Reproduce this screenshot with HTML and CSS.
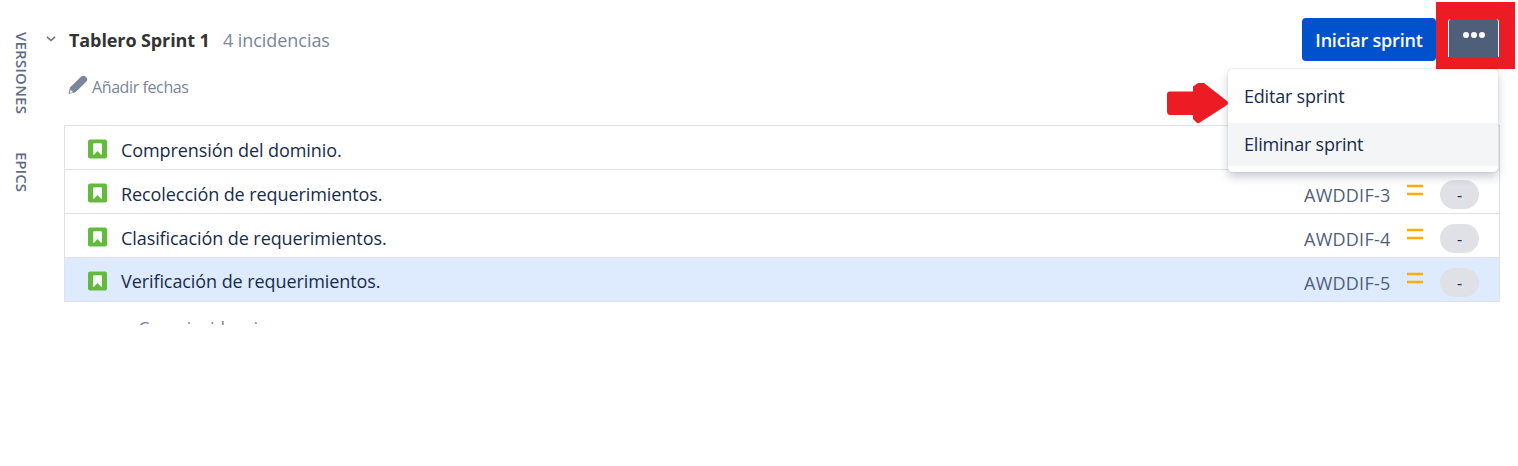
FILE: index.html
```
<!DOCTYPE html>
<html lang="es">
<head>
<meta charset="utf-8">
<title>Tablero Sprint 1</title>
<link rel="stylesheet" href="styles.css">
</head>
<body>
<svg class="defs" width="0" height="0">
  <symbol id="story" viewBox="0 0 19 20"><rect y=".5" width="19" height="19" rx="2" fill="#63ba3c"/><path d="M6 4.300h7q.9 0 .9 1v10.400H13L9.500 12 6 15.700h-.9V5.300q0-1 .9-1z" fill="#fff"/></symbol>
  <symbol id="medium" viewBox="0 0 16 14"><path d="M0 2h16M0 10h16" stroke="#ffab00" stroke-width="2.700"/></symbol>
</svg>
<div class="page">
  <nav class="rail">
    <span class="versions">VERSIONES</span>
    <span class="epics">EPICS</span>
  </nav>
  <main class="sprint">
    <header class="head">
      <svg class="chevron" width="12" height="8" viewBox="0 0 12 8"><path d="M2 1.800l4 3.700 4-3.700" fill="none" stroke="#707070" stroke-width="1.600"/></svg>
      <h1 class="title">Tablero Sprint 1</h1>
      <span class="count">4 incidencias</span>
      <button class="start"><span>Iniciar sprint</span></button>
      <div class="mark"><button class="more" aria-label="Más"><i></i><i></i><i></i></button></div>
    </header>
    <div class="dates">
      <svg width="20" height="20" viewBox="0 0 20 20"><path d="M.6 19l1.300-6.500L13 1.800Q15.500-.2 18 2t.2 4.800L7.500 17.300z" fill="#7a869a"/><path d="M2.600 14.800l2.500 2.500-3.200.7z" fill="#fff"/></svg>
      <span class="add">Añadir fechas</span>
    </div>
    <section class="issues">
      <div class="row"><svg class="story"><use href="#story"/></svg><span class="name n1">Comprensión del dominio.</span></div>
      <div class="row"><svg class="story"><use href="#story"/></svg><span class="name n2">Recolección de requerimientos.</span><span class="key">AWDDIF-3</span><svg class="medium"><use href="#medium"/></svg><span class="points">-</span></div>
      <div class="row"><svg class="story"><use href="#story"/></svg><span class="name n3">Clasificación de requerimientos.</span><span class="key">AWDDIF-4</span><svg class="medium"><use href="#medium"/></svg><span class="points">-</span></div>
      <div class="row selected"><svg class="story"><use href="#story"/></svg><span class="name n4">Verificación de requerimientos.</span><span class="key">AWDDIF-5</span><svg class="medium"><use href="#medium"/></svg><span class="points">-</span></div>
    </section>
    <div class="create"><span>Crear incidencia</span></div>
  </main>
  <div class="menu">
    <div class="item"><span class="edit">Editar sprint</span></div>
    <div class="item active"><span class="remove">Eliminar sprint</span></div>
  </div>
  <svg class="arrow" width="61" height="42" viewBox="0 0 61 42"><path d="M3 9.500h23V4.500L31 1h6l23 18q2 2 0 4L32 41h-2l-4-4v-4H3q-3 0-3-4V12.500q0-3 3-3z" fill="#ed1c24"/></svg>
</div>
</body>
</html>
```
FILE: styles.css
```
* { box-sizing: border-box; }
body { margin: 0; background: #fff; overflow: hidden; font-family: "Open Sans", "Noto Sans", sans-serif; font-size: 18px; color: #172b4d; }
button { border: 0; padding: 0; font: inherit; }
.defs { position: absolute; }
.page { position: relative; display: flex; width: 1518px; height: 466px; }
.rail { width: 44px; padding: 32px 0 0 12px; display: flex; flex-direction: column; align-items: flex-start; gap: 36px; color: #5e6c84; font-size: 15px; font-weight: 600; }
.rail span { writing-mode: vertical-rl; width: 20px; line-height: 20px; white-space: nowrap; }
.versions { height: 84px; letter-spacing: 0.2px; }
.epics { height: 42px; letter-spacing: 0; }
.sprint { width: 1474px; }
.head { display: flex; height: 74px; padding-top: 2px; white-space: nowrap; }
.chevron { margin: 33px 0 0 1px; }
.title { margin: 25px 0 0 12px; width: 154px; font-size: 18px; line-height: 26px; font-weight: 700; color: #333; letter-spacing: -0.1px; }
.count { margin-top: 25px; line-height: 26px; color: #7a869a; letter-spacing: -0.06px; }
.start { margin: 16px 0 0 auto; width: 134px; height: 43px; border-radius: 4px; background: #0052cc; color: #fff; font-weight: 600; letter-spacing: -0.2px; }
.mark { width: 79px; height: 67px; margin-right: 3px; background: #ed1c24; padding: 17px 0 0 12px; }
.more { width: 51px; height: 38px; background: #505f79; border: solid #fff; border-width: 0 1px; border-radius: 3px 3px 0 0; display: flex; justify-content: center; gap: 2px; padding-top: 13px; }
.more i { width: 6px; height: 6px; border-radius: 50%; background: #fff; }
.dates { display: flex; height: 51px; padding-left: 24px; color: #7a869a; font-size: 16px; }
.dates svg { margin-top: 1px; }
.add { margin: 1px 0 0 4px; line-height: 24px; letter-spacing: -0.4px; }
.issues { width: 1436px; margin-left: 20px; border: 1px solid #dfe1e6; }
.row { height: 44px; padding-left: 23px; display: flex; border-bottom: 1px solid #dfe1e6; }
.row:last-child { height: 43px; border-bottom: 0; }
.selected { background: #deebff; }
.story { width: 19px; height: 20px; margin-top: 13px; }
.name { margin: 11px 0 0 14px; line-height: 26px; letter-spacing: -0.08px; white-space: nowrap; }
.n4 { margin-top: 10px; }
.key { margin: 12px 0 0 auto; width: 103px; line-height: 26px; color: #505f79; letter-spacing: 0.25px; white-space: nowrap; }
.medium { width: 16px; height: 14px; margin-top: 14px; }
.points { width: 39px; height: 29px; margin: 10px 20px 0 17px; border-radius: 15px; background: #dfe1e6; font-size: 16px; line-height: 30px; text-align: center; }
.create { height: 23px; padding: 13px 0 0 94px; overflow: hidden; line-height: 26px; color: #7a869a; letter-spacing: -0.35px; }
.menu { position: absolute; left: 1228px; top: 69px; width: 270px; height: 103px; padding: 6px 0; border-radius: 4px; background: #fff; box-shadow: 0 5px 10px rgba(9,30,66,.22), 0 0 1px rgba(9,30,66,.4); }
.item { height: 43px; padding-left: 16px; line-height: 43px; letter-spacing: -0.2px; }
.item + .item { margin-top: 5px; }
.active { background: #f4f5f7; }
.arrow { position: absolute; left: 1167px; top: 82px; }
```
